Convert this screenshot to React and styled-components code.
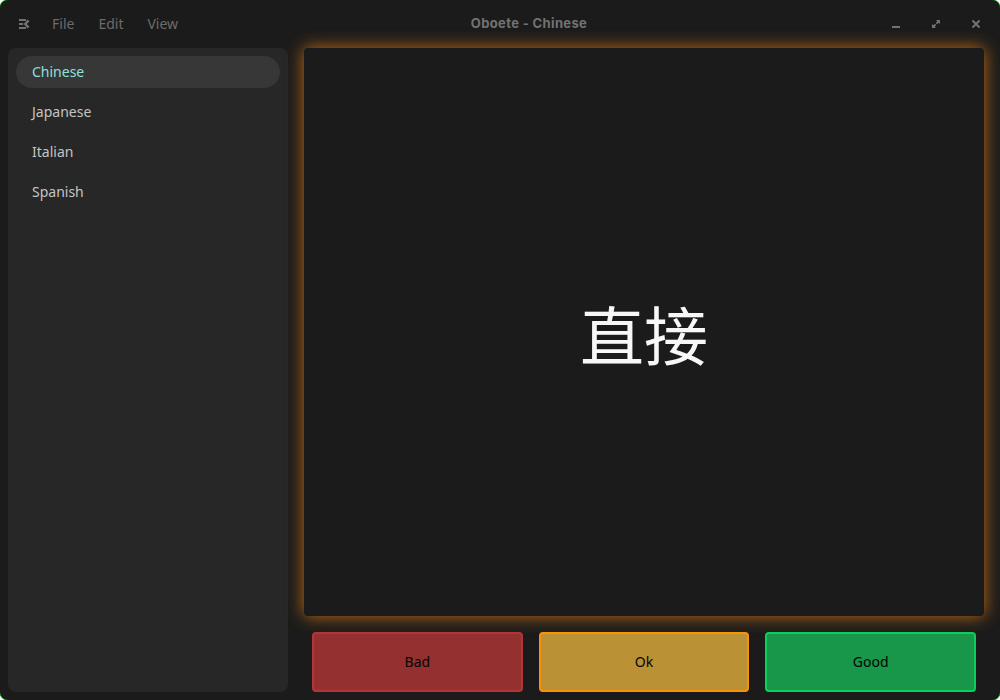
import React from "react";
import styled, { createGlobalStyle } from "styled-components";

const GlobalStyle = createGlobalStyle`
  * { box-sizing: border-box; }
  body { margin: 0; background: #fff; overflow: hidden; }
`;

const Window = styled.div`
  width: 1000px;
  height: 700px;
  display: flex;
  flex-direction: column;
  overflow: hidden;
  border-radius: 8px;
  background: #1b1b1b;
  box-shadow: 0 0 0 0.6px #18c818;
  color: #c4c4c4;
  font: 14px/20px "Noto Sans", sans-serif;
`;

const HeaderBar = styled.header`
  height: 48px;
  display: grid;
  grid-template-columns: 400px 258px 342px;
  align-items: center;
  color: #727272;
`;

const MenuBar = styled.nav`
  display: flex;
  align-items: center;
  padding-left: 8px;
`;

const IconButton = styled.button`
  width: 32px;
  height: 32px;
  display: grid;
  place-items: center;
  padding: 0;
  border: 0;
  background: none;
  color: inherit;
`;

const MenuItem = styled.button`
  padding: 0 12px;
  border: 0;
  background: none;
  color: #6b6b6b;
  font: inherit;
`;

const Title = styled.h1`
  margin: 0;
  padding-bottom: 2px;
  text-align: center;
  white-space: nowrap;
  font: 700 13px/20px Inter, sans-serif;
  letter-spacing: 0.36px;
`;

const WindowControls = styled.div`
  display: flex;
  justify-content: flex-end;
  gap: 8px;
  padding-right: 8px;
`;

const Body = styled.div`
  flex: 1;
  display: flex;
  gap: 16px;
  padding: 0 16px 8px 8px;
`;

const Sidebar = styled.aside`
  width: 280px;
  display: flex;
  flex-direction: column;
  gap: 8px;
  padding: 8px;
  border-radius: 8px;
  background: #272727;
`;

const SidebarItem = styled.a`
  padding: 6px 16px;
  border-radius: 16px;
  background: ${(p) => (p.$active ? "#373737" : "transparent")};
  color: ${(p) => (p.$active ? "#8ce0dc" : "#c4c4c4")};
`;

const Study = styled.main`
  flex: 1;
  display: flex;
  flex-direction: column;
  gap: 16px;
`;

const Card = styled.section`
  height: 568px;
  display: flex;
  align-items: center;
  justify-content: center;
  border-radius: 4px;
  background: #1b1b1b;
  box-shadow: 0 0 17px rgba(255, 140, 20, 0.74);
  color: #f7f7f7;
  font: 64px/92px "Noto Sans CJK SC", sans-serif;
`;

const Answers = styled.div`
  height: 60px;
  display: flex;
  gap: 16px;
  padding: 0 8px;
`;

const AnswerButton = styled.button`
  flex: 1;
  padding: 0;
  border: 2px solid ${(p) => p.$edge};
  border-radius: 4px;
  background: ${(p) => p.$fill};
  color: #050505;
  font: inherit;
`;

const decks = ["Chinese", "Japanese", "Italian", "Spanish"];
const answers = [
  { label: "Bad", fill: "#943030", edge: "#b33538" },
  { label: "Ok", fill: "#bb9136", edge: "#fb9108" },
  { label: "Good", fill: "#18964a", edge: "#0ad05b" },
];

const SidebarIcon = () => (
  <svg width="16" height="16" viewBox="0 0 16 16" fill="none" stroke="currentColor" strokeWidth="2">
    <path d="M3 4h7M3 8h4.2M3 12h7" />
    <path d="M12.6 4.4 9.3 8l3.3 3.6" strokeWidth="2.4" />
  </svg>
);

const MinimizeIcon = () => (
  <svg width="16" height="16" viewBox="0 0 16 16" fill="currentColor">
    <path d="M4 10h8v2H4z" />
  </svg>
);

const MaximizeIcon = () => (
  <svg width="16" height="16" viewBox="0 0 16 16" fill="currentColor">
    <path d="M8 4h4v4l-1.3-1.3-1.6 1.6-1.4-1.4 1.6-1.6zM8 12H4V8l1.3 1.3 1.6-1.6 1.4 1.4-1.6 1.6z" />
  </svg>
);

const CloseIcon = () => (
  <svg width="16" height="16" viewBox="0 0 16 16" fill="none" stroke="currentColor" strokeWidth="2">
    <path d="m4.5 4.5 7 7M11.5 4.5l-7 7" />
  </svg>
);

export default function App() {
  return (
    <>
      <GlobalStyle />
      <Window>
        <HeaderBar>
          <MenuBar>
            <IconButton aria-label="Toggle sidebar"><SidebarIcon /></IconButton>
            <MenuItem>File</MenuItem>
            <MenuItem>Edit</MenuItem>
            <MenuItem>View</MenuItem>
          </MenuBar>
          <Title>Oboete - Chinese</Title>
          <WindowControls>
            <IconButton aria-label="Minimize"><MinimizeIcon /></IconButton>
            <IconButton aria-label="Maximize"><MaximizeIcon /></IconButton>
            <IconButton aria-label="Close"><CloseIcon /></IconButton>
          </WindowControls>
        </HeaderBar>
        <Body>
          <Sidebar>
            {decks.map((deck, i) => (
              <SidebarItem key={deck} $active={i === 0}>{deck}</SidebarItem>
            ))}
          </Sidebar>
          <Study>
            <Card lang="zh-CN">直接</Card>
            <Answers>
              {answers.map((a) => (
                <AnswerButton key={a.label} $fill={a.fill} $edge={a.edge}>{a.label}</AnswerButton>
              ))}
            </Answers>
          </Study>
        </Body>
      </Window>
    </>
  );
}
